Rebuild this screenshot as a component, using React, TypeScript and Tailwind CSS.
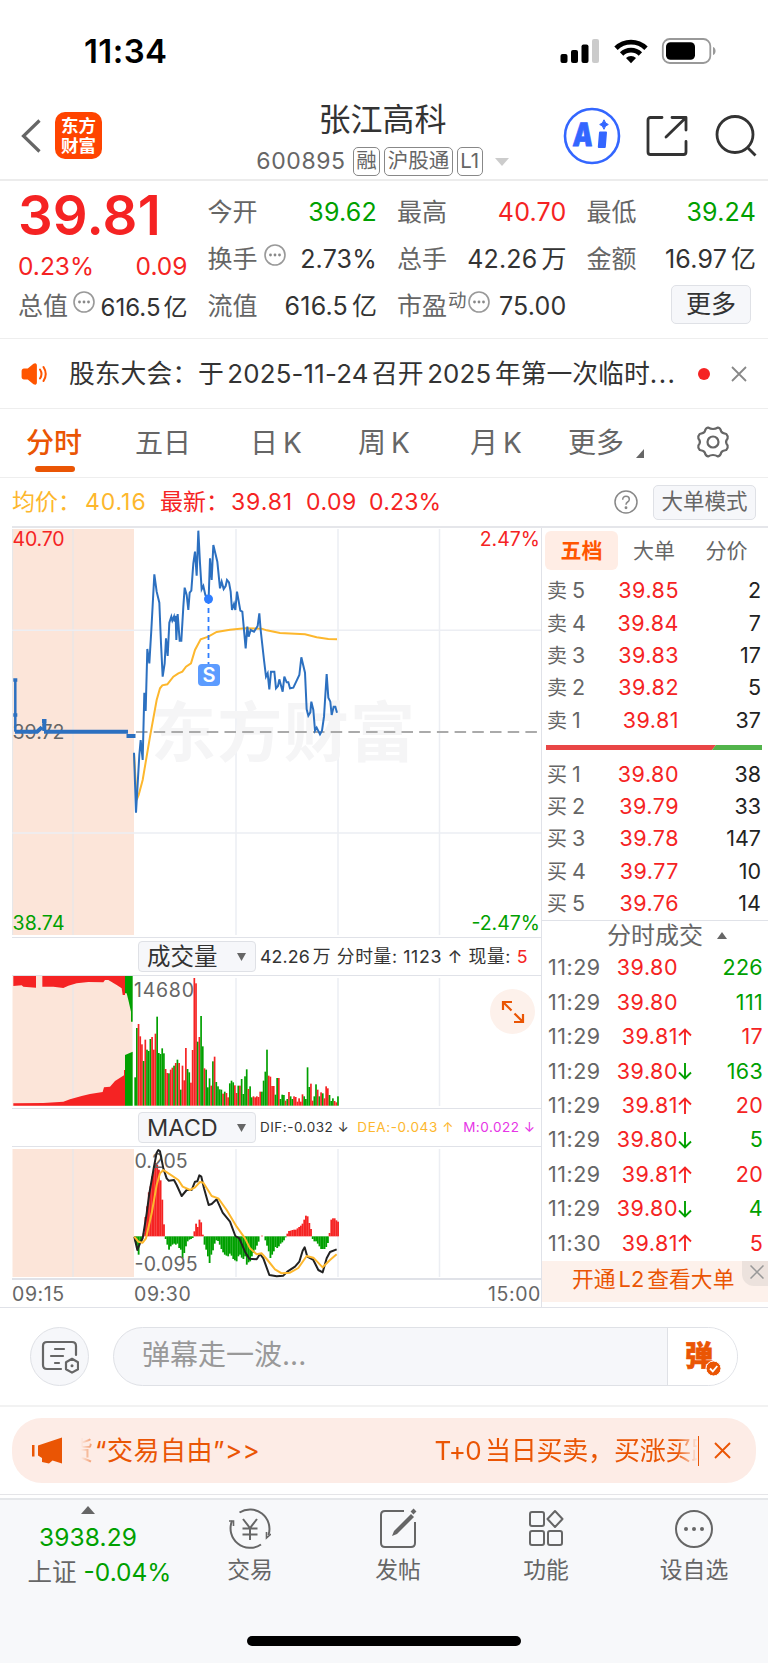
import type { ReactNode } from 'react';

const RED = '#f52323';
const GREEN = '#00a000';

interface OrderRow {
  label: string;
  price: string;
  volume: number;
}

interface Tick {
  time: string;
  price: string;
  dir?: 'up' | 'down';
  volume: number;
  color: 'red' | 'green';
}

const sells: OrderRow[] = [
  { label: '5', price: '39.85', volume: 2 },
  { label: '4', price: '39.84', volume: 7 },
  { label: '3', price: '39.83', volume: 17 },
  { label: '2', price: '39.82', volume: 5 },
  { label: '1', price: '39.81', volume: 37 },
];

const buys: OrderRow[] = [
  { label: '1', price: '39.80', volume: 38 },
  { label: '2', price: '39.79', volume: 33 },
  { label: '3', price: '39.78', volume: 147 },
  { label: '4', price: '39.77', volume: 10 },
  { label: '5', price: '39.76', volume: 14 },
];

const ticks: Tick[] = [
  { time: '11:29', price: '39.80', volume: 226, color: 'green' },
  { time: '11:29', price: '39.80', volume: 111, color: 'green' },
  { time: '11:29', price: '39.81', dir: 'up', volume: 17, color: 'red' },
  { time: '11:29', price: '39.80', dir: 'down', volume: 163, color: 'green' },
  { time: '11:29', price: '39.81', dir: 'up', volume: 20, color: 'red' },
  { time: '11:29', price: '39.80', dir: 'down', volume: 5, color: 'green' },
  { time: '11:29', price: '39.81', dir: 'up', volume: 20, color: 'red' },
  { time: '11:29', price: '39.80', dir: 'down', volume: 4, color: 'green' },
  { time: '11:30', price: '39.81', dir: 'up', volume: 5, color: 'red' },
];

// 分时量: g = 绿柱, r = 红柱
const volumes =
  'g85 g233 r245 r208 r184 g134 r198 g168 g164 g200 r206 r168 r216 g267 g158 g155 g172 g157 r110 r98 g97 r108 r114 g120 r128 g138 r128 g48 r120 r76 r173 g110 g100 r69 r167 r383 r367 g192 r206 g269 g178 r112 g108 g55 g82 r60 g133 r147 g71 g58 g49 g48 r36 g42 r38 r25 g67 g75 g70 r61 r38 g60 r60 g80 g35 g88 g109 r50 g58 g25 r28 r25 r28 r26 r42 g42 g75 g102 g168 r90 r87 r59 r59 g33 g83 r83 g20 g33 g32 r15 g20 r41 g28 g20 r28 r26 r12 r22 r12 r34 g28 g20 g115 g56 r66 r15 g28 g64 r48 g28 r40 g37 r22 r58 r52 g32 g14 g22 r14 r10 g28'.split(' ');

const macd = [
  -15, -35, -55, -15, -12, 10, 58, 90, 132, 150, 180, 200, 220, 215, 200, 168, 110, 36, -8, -25, -40, -30, -25, -22,
  -25, -22, -35, -40, -65, -50, -30, -15, -10, -8, -5, 15, 38, 28, 50, 42, 5, -25, -40, -60, -80, -55, -42, -22,
  -12, -14, -25, -38, -48, -55, -58, -60, -52, -58, -68, -72, -75, -60, -55, -64, -68, -60, -85, -78, -75, -60, -50,
  -40, -28, -16, 0, 2, 0, -12, -28, -45, -65, -55, -45, -32, -35, -30, -22, -18, -12, -3, 8, 16, 17, 19, 20, 20, 24,
  28, 32, 38, 50, 62, 60, 40, 22, -8, -15, -15, -22, -30, -38, -38, -38, -32, -20, 10, 50, 54, 54, 48, 44, 38, 30,
].slice(0, 121);

const priceLine =
  '12,698 18,878 28,705 32,660 38,720 43,518 47,573 52,387 58,430 64,330 73,163 80,215 88,248 93,370 98,470 104,430 108,355 113,408 118,308 124,290 127,302 132,290 134,305 137,287 139,360 143,282 149,362 154,362 160,260 164,203 170,225 175,270 179,218 184,212 190,130 195,95 200,167 205,32 210,130 215,208 220,198 226,225 236,235 240,115 245,180 250,75 262,125 270,205 275,185 281,207 287,198 291,180 297,187 302,215 306,270 312,252 316,270 321,215 331,272 337,275 347,385 352,320 356,350 362,330 372,335 383,318 388,280 392,330 402,420 408,470 413,460 418,508 423,455 433,455 438,505 444,498 448,478 458,515 463,470 470,487 475,487 480,505 490,503 500,482 508,465 514,412 525,458 530,568 535,587 541,577 544,545 550,570 555,632 560,623 570,643 576,632 582,590 590,462 595,533 601,545 605,585 611,560 616,560 621,578';

const avgLine =
  '12,700 20,840 26,825 38,780 60,650 80,540 90,505 97,496 112,493 130,470 145,460 157,455 168,440 183,430 195,390 212,358 235,350 260,336 300,329 345,325 395,326 410,331 450,339 525,343 560,352 595,357 621,358';

const difLine =
  '403,380 412,420 420,400 428,385 440,310 448,250 462,170 470,128 475,120 480,124 490,175 500,205 506,212 522,210 530,225 545,258 560,240 575,240 585,215 592,214 598,196 604,200 612,235 626,285 635,282 650,268 668,308 690,335 706,378 718,385 735,425 748,446 770,448 780,432 790,445 808,495 830,499 850,497 862,485 885,470 898,455 908,422 914,412 922,440 940,450 955,480 968,487 980,445 990,426 1010,418';

const deaLine =
  '403,380 415,395 428,398 438,385 455,310 470,225 480,190 490,180 510,193 535,210 548,230 570,240 585,232 600,216 610,218 635,258 655,265 680,300 710,350 735,385 750,415 770,433 785,430 800,447 825,478 845,490 870,488 895,474 920,438 940,443 968,472 990,450 1010,433';

function StatusBar() {
  return (
    <div className="h-[91px] flex items-start justify-between pl-[84px] pr-[51px] pt-[38px]">
      <span className="text-[33px] leading-none font-semibold text-black tracking-[0.4px] mt-[-3px]">11:34</span>
      <div className="flex">
        <svg width="40" height="26" viewBox="0 0 40 26">
          <rect x="0.5" y="16" width="7" height="9" rx="2" />
          <rect x="11" y="12" width="7" height="13" rx="2" />
          <rect x="21.5" y="6.5" width="7" height="18.5" rx="2" />
          <rect x="32" y="1" width="7" height="24" rx="2" fill="#cbcbcb" />
        </svg>
        <svg className="ml-[14px]" width="34" height="26" viewBox="0 0 34 26" fill="none" stroke="#000" strokeWidth="4.8">
          <path d="M2 10.3a21.3 21.3 0 0 1 30 0" />
          <path d="M7.6 16a13.4 13.4 0 0 1 18.8 0" />
          <path d="M17 25.2l-5-5.2a7.2 7.2 0 0 1 10 0z" fill="#000" stroke="none" />
        </svg>
        <svg className="ml-[13px]" width="56" height="26" viewBox="0 0 56 26">
          <rect x="1.8" y="1" width="47.5" height="24" rx="7" fill="none" stroke="#999" strokeWidth="1.8" />
          <rect x="5" y="4.2" width="29" height="17.6" rx="4.5" />
          <path d="M52 9c3.4 1 3.4 7 0 8z" fill="#999" />
        </svg>
      </div>
    </div>
  );
}

function Badge({ children }: { children: ReactNode }) {
  return (
    <span className="h-[29px] flex items-center border-[1.5px] border-[#888] rounded-[5px] px-[2.5px] text-[20.5px] leading-none">
      {children}
    </span>
  );
}

function Header() {
  return (
    <div className="h-[90px] flex items-start justify-between border-b-2 border-[#ececec] pl-5 pr-[11px]">
      <div className="w-[218px] flex items-center h-[90px]">
        <svg width="22" height="36" viewBox="0 0 22 36" fill="none" stroke="#666" strokeWidth="3.2">
          <path d="M19.5 2.5L3.5 18L19.5 33.5" />
        </svg>
        <div className="ml-[13px] mb-[2px] size-[47px] rounded-[10px] bg-[#ff4400] flex flex-col items-center justify-center text-white text-[17.5px] leading-[20px] font-bold font-['Noto_Sans_CJK_SC',sans-serif]">
          <span>东方</span>
          <span>财富</span>
        </div>
      </div>
      <div className="flex flex-col items-center pt-[13px]">
        <h1 className="text-[32px] leading-[32px] text-[#333]">张江高科</h1>
        <div className="mt-[11px] flex items-center text-[#666]">
          <span className="text-[23px] leading-none mr-[7px] tracking-[0.6px]">600895</span>
          <div className="flex gap-1">
            <Badge>融</Badge>
            <Badge>沪股通</Badge>
            <Badge>L1</Badge>
          </div>
          <svg className="ml-3" width="14" height="8" viewBox="0 0 14 8" fill="#ccc">
            <path d="M0 0h14l-7 8z" />
          </svg>
        </div>
      </div>
      <div className="w-[230px] flex items-center justify-end h-[90px]">
        <svg width="58" height="58" viewBox="0 0 58 58">
          <circle cx="29" cy="29" r="27" fill="#fff" stroke="#3366ff" strokeWidth="2.6" />
          <text x="12" y="39.3" fontFamily="Inter" fontWeight="900" fontSize="32" fill="#3366ff" stroke="#3366ff" strokeWidth=".8" textLength="20" lengthAdjust="spacingAndGlyphs" transform="skewX(-4)">A</text>
          <path d="M37 25.5h6l-1.2 14.500h-6z" fill="#3366ff" stroke="#3366ff" strokeWidth="2" strokeLinejoin="round" />
          <path d="M41 12.800q1.200 4 4.300 4.700q-3.400 .9-4.300 4.800q-1.200-4-4.300-4.800q3.200-.8 4.300-4.700z" fill="#3366ff" stroke="#3366ff" />
        </svg>
        <svg className="ml-[25px]" width="42" height="42" viewBox="0 0 42 42" fill="none" stroke="#333" strokeWidth="2.8" strokeLinecap="round" strokeLinejoin="round">
          <path d="M16 2.500H4.500q-2.500 0-2.500 2.500v32q0 2.500 2.500 2.500h33q2.500 0 2.500-2.500V26.500" />
          <path d="M26 2.500h14v12.500M39.500 3L20 22" />
        </svg>
        <svg className="ml-[27px]" width="42" height="42" viewBox="0 0 42 42" fill="none" stroke="#333" strokeWidth="2.8">
          <circle cx="20" cy="19.500" r="18" />
          <path d="M32 32l8.500 8.500" />
        </svg>
      </div>
    </div>
  );
}

function Dots({ className }: { className?: string }) {
  return (
    <svg className={className} width="22" height="22" viewBox="0 0 22 22">
      <circle cx="11" cy="11" r="10" fill="none" stroke="#999" strokeWidth="1.600" />
      <circle cx="6.500" cy="11" r="1.400" fill="#888" />
      <circle cx="11" cy="11" r="1.400" fill="#888" />
      <circle cx="15.500" cy="11" r="1.400" fill="#888" />
    </svg>
  );
}

interface CellProps {
  label: string;
  sup?: string;
  dots?: boolean;
  value: string;
  unit?: string;
  color?: string;
}

function Cell({ label, sup, dots, value, unit, color = 'text-[#333]' }: CellProps) {
  return (
    <div className="h-[47px] flex items-center justify-between leading-none whitespace-nowrap">
      <span className="flex items-center text-[25px] text-[#666]">
        {label}
        {sup && <span className="text-[18.5px] mb-[13px] ml-[1px]">{sup}</span>}
        {dots && <Dots className={sup ? 'mb-2.5 ml-[1px]' : 'mb-2.5 ml-[6px]'} />}
      </span>
      <span className={`text-[25px] tracking-[0.2px] ${color}`}>
        {value}
        {unit && <span className="ml-1 tracking-normal">{unit}</span>}
      </span>
    </div>
  );
}

function Quote() {
  return (
    <div className="h-[158px] grid grid-cols-4 gap-x-5 pl-[18px] pr-[12px] pt-[8px] border-b border-[#eee]">
      <div>
        <div className="h-[53px] flex items-center text-[54.5px] leading-none font-semibold text-[#f52323] tracking-[0.2px]">39.81</div>
        <div className="h-[40px] flex items-center pt-[8px] justify-between text-[24.5px] leading-none text-[#f52323]">
          <span>0.23%</span>
          <span>0.09</span>
        </div>
        <div className="h-[49px] flex items-center justify-between leading-none whitespace-nowrap">
          <span className="flex items-center text-[25px] text-[#666]">总值<Dots className="mb-2.5 ml-[5px]" /></span>
          <span className="text-[24px] mt-[2px] text-[#333]">616.5<span className="ml-[3px]">亿</span></span>
        </div>
      </div>
      <div>
        <Cell label="今开" value="39.62" color="text-[#00a000]" />
        <Cell label="换手" dots value="2.73%" />
        <Cell label="流值" value="616.5" unit="亿" />
      </div>
      <div>
        <Cell label="最高" value="40.70" color="text-[#f52323]" />
        <Cell label="总手" value="42.26" unit="万" />
        <Cell label="市盈" sup="动" dots value="75.00" />
      </div>
      <div>
        <Cell label="最低" value="39.24" color="text-[#00a000]" />
        <Cell label="金额" value="16.97" unit="亿" />
        <div className="flex justify-end pr-[5px] pt-[2px]">
          <button className="w-[80px] h-[39px] text-[25px] leading-none text-[#333] bg-[#f6f7fa] border-[1.5px] border-[#dfe1e6] rounded-[5px]">更多</button>
        </div>
      </div>
    </div>
  );
}

function Notice() {
  return (
    <div className="h-[70px] flex items-center pl-[21px] pr-[21px] border-b border-[#eee]">
      <svg width="27" height="22" viewBox="0 0 27 22" fill="none" stroke="#ff5500" strokeWidth="2" strokeLinecap="round">
        <path d="M3 6.500h4L13 1.500q2-1 2 1v17q0 2-2 1L7 15.500H3q-1.500 0-1.500-1.500V8q0-1.500 1.500-1.500z" fill="#ff5500" stroke="#ff5500" strokeWidth="1.800" />
        <path d="M19 6.500q3 4.500 0 9M22.500 4q4.500 7 0 14" />
      </svg>
      <p className="ml-[21px] w-[608px] text-[25.8px] leading-none text-[#333] whitespace-nowrap">
        股东大会：于<span className="mx-[3.5px] tracking-[0.2px]">2025-11-24</span>召开<span className="mx-[3.5px] tracking-[0.2px]">2025</span>年第一次临时<span className="tracking-[1.5px]">...</span>
      </p>
      <span className="ml-auto size-3 rounded-full bg-[#f52323]" />
      <svg className="ml-[21px]" width="16" height="16" viewBox="0 0 16 16" stroke="#888" strokeWidth="1.800">
        <path d="M1 1l14 14M15 1L1 15" />
      </svg>
    </div>
  );
}

function Tabs() {
  return (
    <div className="h-[69px] flex items-center text-[28px] leading-none text-[#666] border-b border-[#eee] pl-[26px] whitespace-nowrap">
      <div className="relative w-[109px] font-medium text-[#ea5504]">
        分时
        <span className="absolute left-[9px] top-[37px] w-10 h-[6px] rounded-full bg-[#ea5504]" />
      </div>
      <span className="w-[115px]">五日</span>
      <span className="w-[108px]">日<span className="ml-[5px]">K</span></span>
      <span className="w-[112px]">周<span className="ml-[5px]">K</span></span>
      <span className="w-[98px]">月<span className="ml-[5px]">K</span></span>
      <span className="w-[58px]">更多</span>
      <svg className="ml-[10px] mt-[21px]" width="8" height="9" viewBox="0 0 8 9" fill="#666">
        <path d="M8 0v9H0z" />
      </svg>
      <svg className="ml-[52px] mt-[-2px]" width="34" height="34" viewBox="0 0 34 34" fill="none" stroke="#666" strokeWidth="2.200" strokeLinejoin="round">
        <path d="M12 2.500q5 3 10 0q2.500 .5 3.300 4.200q1 1.600 5 2.300q2 2 1.300 4.500q-3 3.500 0 7q.7 2.500-1.300 4.500q-4 .7-5 2.300q-.8 3.700-3.300 4.200q-5-3-10 0q-2.500-.5-3.300-4.200q-1-1.600-5-2.300q-2-2-1.300-4.500q3-3.500 0-7q-.7-2.500 1.300-4.500q4-.7 5-2.300q.8-3.700 3.300-4.200z" />
        <circle cx="17" cy="17" r="5.500" />
      </svg>
    </div>
  );
}

function Summary() {
  return (
    <div className="h-[48px] flex items-center pl-[12px] pr-3 leading-none text-[23px] text-[#f52323] whitespace-nowrap">
      <div className="flex items-center text-[#fdb72d]">
        <span className="w-[73px]">均价：</span>
        <span className="w-[75px] tracking-[0.9px]">40.16</span>
      </div>
      <span className="w-[71px]">最新：</span>
      <span className="w-[75px] tracking-[0.9px]">39.81</span>
      <span className="w-[63px] tracking-[0.5px]">0.09</span>
      <span className="tracking-[0.2px]">0.23%</span>
      <svg className="ml-auto" width="24" height="24" viewBox="0 0 24 24" fill="none" stroke="#888" strokeWidth="1.500">
        <circle cx="12" cy="12" r="11" />
        <path d="M8.700 9.700q0-3.400 3.300-3.400t3.300 3q0 1.700-1.700 2.700t-1.600 2.700" />
        <circle cx="12" cy="17.700" r=".7" fill="#888" />
      </svg>
      <button className="ml-[15px] w-[103px] h-[35px] text-[21.5px] leading-none text-[#666] bg-[#f6f7fa] border-[1.5px] border-[#dfe1e6] rounded-[5px]">大单模式</button>
    </div>
  );
}

function PriceChart() {
  return (
    <svg className="block w-[529px] h-[409px]" viewBox="12 528 529 409" fontFamily="Inter" fontSize="19.500">
      <rect x="12.500" y="529" width="121.500" height="406" fill="#fce5d9" />
      <path d="M73 529v406M12.500 529v406" stroke="#e7e7e9" strokeWidth="1.300" />
      <path d="M236 529v406M338 529v406M439.500 529v406M12 630.300h530M12 833h530" stroke="#eceef3" strokeWidth="1.500" />
      <text x="151" y="756" fontFamily="Noto Sans CJK SC" fontWeight="700" fontSize="65" fill="#f5f5f6" textLength="264">东方财富</text>
      <path d="M136 732H542" stroke="#aaa" strokeWidth="1.800" strokeDasharray="11.500 6.200" />
      <text x="12.500" y="738.500" fill="#666" textLength="52">39.72</text>
      <g transform="translate(130 520) scale(.33333)" fill="none" strokeLinejoin="miter">
        <polyline points={avgLine} stroke="#fdb72d" strokeWidth="6" />
        <polyline points={priceLine} stroke="#2c70c0" strokeWidth="6" />
      </g>
      <path d="M15.300 679v52.700" stroke="#2c70c0" strokeWidth="2.500" />
      <path d="M13.300 680h4M13.300 715h4" stroke="#2c70c0" strokeWidth="3.500" />
      <path d="M15 731.700h22l5-4.500M42 721h4.500M44.300 721v10M44 731.700h84M126.500 736h9" fill="none" stroke="#2c70c0" strokeWidth="4" />
      <path d="M208.500 599v65" stroke="#2e7dff" strokeWidth="1.800" strokeDasharray="5 4" />
      <circle cx="208.500" cy="599" r="4.500" fill="#2e7dff" />
      <rect x="198" y="664" width="22" height="22" rx="4" fill="#5c9cff" />
      <text x="208.900" y="682.300" fill="#fff" fontSize="20" fontWeight="600" textAnchor="middle">S</text>
      <text x="12.500" y="545.700" fill={RED} textLength="52">40.70</text>
      <text x="12.500" y="929.500" fill={GREEN} textLength="52">38.74</text>
      <text x="540" y="545.700" fill={RED} textAnchor="end">2.47%</text>
      <text x="540" y="929.500" fill={GREEN} textAnchor="end">-2.47%</text>
    </svg>
  );
}

function VolumeChart() {
  return (
    <svg className="block w-[529px] h-[132px]" viewBox="12 976 529 132" fontFamily="Inter" fontSize="19.500">
      <rect x="12.500" y="976" width="120" height="130" fill="#fce5d9" />
      <path d="M73 976v130" stroke="#e7e7e9" strokeWidth="1.300" />
      <path d="M236 978v128M338 978v128M439.500 978v128" stroke="#eceef3" strokeWidth="1.500" />
      <g transform="translate(0 920) scale(.33333)">
        <path d="M40 168H108V203L70 200L65 196L40 198ZM127 168H375V225H368L365 205L350 195L325 180H315L310 187L265 186L230 190L205 197L190 204L160 200H127Z" fill={RED} />
        <path d="M375 168H398V305H393V275L385 240L380 220H375Z" fill={GREEN} />
        <path d="M40 557V550L130 549L190 545L210 538L245 528L270 522L308 516L312 502L330 500L345 483L372 466V450H375V557Z" fill={RED} />
        <path d="M375 557V405L398 395V557Z" fill={GREEN} />
        {volumes.map((v, i) => {
          const h = Number(v.slice(1));
          return <rect key={i} x={403 + i * 5.07} y={557 - h} width="5.070" height={h} fill={v[0] === 'g' ? GREEN : RED} />;
        })}
      </g>
      <text x="134" y="996.500" fill="#666" textLength="60">14680</text>
    </svg>
  );
}

function MacdChart() {
  return (
    <svg className="block w-[529px] h-[131px]" viewBox="12 1147 529 131" fontFamily="Inter" fontSize="19.500">
      <rect x="12.500" y="1149" width="121.500" height="128" fill="#fce5d9" />
      <path d="M73 1149v128" stroke="#e7e7e9" strokeWidth="1.300" />
      <path d="M236 1149v128M338 1149v128M439.500 1149v128" stroke="#eceef3" strokeWidth="1.500" />
      <g transform="translate(0 1110) scale(.33333)" fill="none">
        {macd.map((v, i) => (
          <rect key={i} x={403 + i * 5.07} y={v > 0 ? 379 - v : 379} width="5.500" height={Math.abs(v)} fill={v > 0 ? RED : GREEN} />
        ))}
      </g>
      <text x="134.500" y="1167.500" fill="#666" textLength="53">0.205</text>
      <text x="134.500" y="1270.500" fill="#666" textLength="63">-0.095</text>
      <g transform="translate(0 1110) scale(.33333)" fill="none" strokeLinejoin="round">
        <polyline points={difLine} stroke="#222" strokeWidth="6" />
        <polyline points={deaLine} stroke="#fdb72d" strokeWidth="6" />
      </g>
    </svg>
  );
}

function IndicatorSelect({ name }: { name: string }) {
  return (
    <button className="ml-[126px] w-[118px] h-[31px] shrink-0 flex items-center justify-between pl-[8px] pr-[9px] bg-[#f6f7fa] border-[1.5px] border-[#dfe1e6] rounded-[4px] text-[23.5px] leading-none text-[#333]">
      {name}
      <svg width="9" height="8" viewBox="0 0 9 8" fill="#666">
        <path d="M0 0h9L4.500 8z" />
      </svg>
    </button>
  );
}

function Charts() {
  return (
    <div className="w-[529px] shrink-0">
      <PriceChart />
      <div className="h-[39px] flex items-center border-y-[1.5px] border-[#e0e2e8] text-[17.800px] leading-none text-[#333] whitespace-nowrap">
        <IndicatorSelect name="成交量" />
        <span className="ml-[4px] tracking-[0.6px]">
          <span className="tracking-[0.100px]">42.26</span><span className="ml-[3px]">万</span> 分时量: 1123 ↑ 现量: <span className="text-[#f52323]">5</span>
        </span>
      </div>
      <div className="relative">
        <VolumeChart />
        <span className="absolute left-[478px] top-[13px] size-[45px] rounded-full bg-[#fdf1eb] flex items-center justify-center">
          <svg width="24" height="24" viewBox="0 0 24 24" fill="none" stroke="#ea5504" strokeWidth="2.200">
            <path d="M2 10V2h9M2 2l8.500 8.500M22 14v8h-9M22 22l-8.500-8.500" />
          </svg>
        </span>
      </div>
      <div className="h-[39px] flex items-center border-y-[1.5px] border-[#e0e2e8] text-[13.500px] leading-none whitespace-nowrap">
        <IndicatorSelect name="MACD" />
        <span className="ml-[4px] tracking-[0.5px] text-[#333]">DIF:-0.032 ↓</span>
        <span className="ml-[8px] tracking-[0.600px] text-[#fdb72d]">DEA:-0.043 ↑</span>
        <span className="ml-[9px] tracking-[0.500px] text-[#e635e6]">M:0.022 ↓</span>
      </div>
      <MacdChart />
      <div className="h-[29px] flex items-center border-t-2 border-[#e0e2e8] pt-[3px] text-[19.500px] leading-none tracking-[0.600px] text-[#666]">
        <span className="w-[122px]">09:15</span>
        <span>09:30</span>
        <span className="ml-auto">15:00</span>
      </div>
    </div>
  );
}

function Orders({ side, rows }: { side: string; rows: OrderRow[] }) {
  return (
    <>
      {rows.map((row) => (
        <div key={row.label} className="h-[32.300px] flex items-center pl-[5px] pr-[7px] text-[21.500px] leading-none">
          <span className="w-[50px] text-[#666]">
            <span className="text-[20px] mr-[5px]">{side}</span>
            {row.label}
          </span>
          <span className="w-[82px] text-right tracking-[0.500px] text-[#f52323]">{row.price}</span>
          <span className="ml-auto text-[#222]">{row.volume}</span>
        </div>
      ))}
    </>
  );
}

function SidePanel() {
  return (
    <div className="flex-1 border-l-[1.5px] border-[#e0e2e8] whitespace-nowrap">
      <div className="h-[47px] flex items-start pt-[3px] pl-[3px] text-[21px] leading-none text-[#666]">
        <span className="w-[73px] h-[39px] flex items-center justify-center rounded-[6px] bg-[#ffede5] font-bold text-[#ff5500]">五档</span>
        <span className="w-[72px] h-[38px] flex items-center justify-center">大单</span>
        <span className="w-[73px] h-[38px] flex items-center justify-center">分价</span>
      </div>
      <Orders side="卖" rows={sells} />
      <div className="h-[22px] flex items-center pl-[4px] pr-[5px]">
        <svg width="216" height="5" viewBox="0 0 216 5">
          <path d="M0 0h170l-4 5H0z" fill="#e94646" />
          <path d="M170 0h46v5h-50z" fill="#52b44b" />
        </svg>
      </div>
      <Orders side="买" rows={buys} />
      <div className="h-[31px] flex items-center justify-center pl-[20px] border-t-[1.5px] border-[#e0e2e8] text-[24px] leading-none text-[#666]">
        分时成交
        <svg className="ml-[14px] mr-[-4px]" width="10" height="7" viewBox="0 0 10 7" fill="#666">
          <path d="M5 0l5 7H0z" />
        </svg>
      </div>
      {ticks.map((t, i) => (
        <div key={i} className="h-[34.400px] flex items-center pl-[6px] pr-[5px] text-[21.500px] leading-none">
          <span className="w-[55px] tracking-[0.500px] text-[#666]">{t.time}</span>
          <span className="w-[75px] text-right tracking-[0.500px] text-[#f52323]">{t.price}</span>
          {t.dir && (
            <svg width="14" height="18" viewBox="0 0 14 18" fill="none" strokeWidth="1.900" stroke={t.dir === 'up' ? RED : GREEN}>
              <path d={t.dir === 'up' ? 'M7 17V2M1 7.500L7 1.500L13 7.500' : 'M7 1v15M1 10.500L7 16.500L13 10.500'} />
            </svg>
          )}
          <span className={`ml-auto tracking-[0.300px] ${t.color === 'red' ? 'text-[#f52323]' : 'text-[#00a000]'}`}>{t.volume}</span>
        </div>
      ))}
      <div className="relative mt-[1px] h-[41px] flex items-center bg-[#fdf1eb] pl-[30px] pb-[4px] text-[21.800px] leading-none text-[#ea5504]">
        开通<span className="mx-[3px]">L2</span>查看大单
        <span className="absolute right-0 top-0 w-[26px] h-[25px] rounded-bl-[12px] bg-[#ece2dd] flex items-center justify-center pb-[3px] pl-[3px]">
          <svg width="14" height="14" viewBox="0 0 14 14" stroke="#999" strokeWidth="1.500">
            <path d="M.5 .5l13 13M13.500 .5l-13 13" />
          </svg>
        </span>
      </div>
    </div>
  );
}

function CommentBar() {
  return (
    <div className="h-[99px] flex items-start pt-[19px] pl-[30px] border-b-2 border-[#f2f2f2]">
      <div className="size-[59px] rounded-full bg-[#f6f7fa] border-[1.5px] border-[#dfe1e6] flex items-center justify-center">
        <svg width="38" height="34" viewBox="0 0 38 34" fill="none" stroke="#666" strokeWidth="2.200" strokeLinecap="round">
          <path d="M20 29H6q-4 0-4-4V6q0-4 4-4h25q4 0 4 4v9" />
          <path d="M14 9h9M10 16h12M14 23h4" />
          <path d="M31 18.800l6 3.400v7l-6 3.400l-6-3.400v-7z" strokeLinejoin="round" />
          <circle cx="31" cy="25.700" r="1.500" fill="#666" stroke="none" />
        </svg>
      </div>
      <div className="ml-[24px] w-[625px] h-[59px] flex rounded-full bg-[#f6f7fa] border-[1.5px] border-[#dfe1e6] overflow-hidden">
        <span className="flex-1 pl-[28px] pt-[13px] text-[28px] leading-none text-[#999]">弹幕走一波...</span>
        <div className="relative w-[70px] bg-white border-l-[1.5px] border-[#dfe1e6] pl-[17px] pt-[14px] text-[28px] leading-none font-black text-[#ea5504] [-webkit-text-stroke:0.6px_#ea5504]">
          弹
          <svg className="absolute left-[37px] top-[32px]" width="17" height="17" viewBox="0 0 17 17">
            <circle cx="8.500" cy="8.500" r="7.500" fill="#ea5504" stroke="#fff" />
            <path d="M5 8.500l2.800 2.800L12.300 6" fill="none" stroke="#fff" strokeWidth="1.800" />
          </svg>
        </div>
      </div>
    </div>
  );
}

function Promo() {
  return (
    <div className="h-[87px] px-3 pt-[11px]">
      <div className="h-[65px] rounded-[30px] bg-[#fdece6] flex items-center pl-5 pr-[25px] text-[26px] leading-none text-[#ea5504] whitespace-nowrap">
        <svg width="31" height="27" viewBox="0 0 31 27" fill="#ea5504">
          <path d="M0 8h2.500v11.500H0zM6 8.500L30 .5v26l-9.500-3l-3.500 3l-7-1.500v-4L6 18.500z" />
        </svg>
        <div className="ml-[18px] w-[12px] flex justify-end overflow-hidden [mask-image:linear-gradient(to_right,transparent,#000)]">
          <span className="opacity-60">货</span>
        </div>
        <span className="ml-[2px] tracking-[0.500px]">“交易自由”&gt;&gt;</span>
        <div className="ml-auto flex w-[263px] overflow-hidden [mask-image:linear-gradient(to_right,#000_92%,transparent)]">
          <span className="mr-[4px] tracking-[-0.700px]">T+0</span><span className="tracking-[-0.200px]">当日买卖，买涨买跌</span>
        </div>
        <span className="w-[1.500px] h-[30px] bg-[#ea5504]" />
        <svg className="ml-[15px]" width="17" height="17" viewBox="0 0 17 17" stroke="#ea5504" strokeWidth="1.900">
          <path d="M1 1l15 15M16 1L1 16" />
        </svg>
      </div>
    </div>
  );
}

function NavItem({ label, children }: { label: string; children: ReactNode }) {
  return (
    <div className="w-[148px] flex flex-col items-center text-[22.800px] leading-none text-[#666]">
      <svg className="mt-[8px]" width="42" height="42" viewBox="0 0 42 42" fill="none" stroke="#666" strokeWidth="2">
        {children}
      </svg>
      <span className="mt-[9px]">{label}</span>
    </div>
  );
}

function BottomNav() {
  return (
    <div className="border-t border-[#e5e5e8]">
      <div className="mt-[3px] h-[165px] bg-[#f7f8fa] border-t-2 border-[#e5e7ea] flex flex-col">
        <div className="flex">
          <div className="w-[176px] flex flex-col items-center text-[24.500px] leading-none text-[#00a000] whitespace-nowrap">
            <svg className="mt-[6px]" width="14" height="8" viewBox="0 0 14 8" fill="#666">
              <path d="M7 0l7 8H0z" />
            </svg>
            <span className="mt-[11px] tracking-[0.100px]">3938.29</span>
            <span className="mt-[10px] ml-[23px]"><span className="text-[#666] mr-[7px]">上证</span>-0.04%</span>
          </div>
          <NavItem label="交易">
            <path d="M10.500 4.500A19.500 19.500 0 0 1 39.500 27M32 36.500A19.500 19.500 0 0 1 3 13" />
            <path d="M0 13h4.500v5M42 26l-4.500 4v-6" strokeWidth="1.600" />
            <path d="M14 11l7 9l7-9M13.500 20.500h15M13.500 26.500h15M21 20v12" />
          </NavItem>
          <NavItem label="发帖">
            <path d="M27 3H8Q4 3 4 7v28q0 4 4 4h26q4 0 4-4V14" />
            <path d="M34 6l3 3L20 26l-5 2l2-5z" fill="#666" stroke="none" />
            <path d="M35 5l3-3" strokeWidth="4" />
          </NavItem>
          <NavItem label="功能">
            <rect x="5" y="4" width="14" height="14" rx="2" />
            <rect x="5" y="23" width="14" height="14" rx="2" />
            <rect x="23" y="23" width="14" height="14" rx="2" />
            <path d="M30 3l7.500 8L30 19l-7.500-8z" strokeLinejoin="round" />
          </NavItem>
          <NavItem label="设自选">
            <circle cx="21" cy="21" r="18" />
            <g fill="#666" stroke="none">
              <circle cx="13" cy="21" r="2" />
              <circle cx="21" cy="21" r="2" />
              <circle cx="29" cy="21" r="2" />
            </g>
          </NavItem>
        </div>
        <div className="mt-auto mb-[17px] mx-auto w-[274px] h-[10px] rounded-full bg-black" />
      </div>
    </div>
  );
}

export default function App() {
  return (
    <div className="w-[768px] h-[1663px] overflow-hidden bg-white font-['Inter','Noto_Sans_CJK_SC',sans-serif]">
      <StatusBar />
      <Header />
      <Quote />
      <Notice />
      <Tabs />
      <Summary />
      <div className="h-[782px] flex border-b-[1.5px] border-[#e0e2e8]">
        <div className="w-full ml-3 flex border-t-2 border-[#e5e6ea]">
          <Charts />
          <SidePanel />
        </div>
      </div>
      <CommentBar />
      <Promo />
      <BottomNav />
    </div>
  );
}
